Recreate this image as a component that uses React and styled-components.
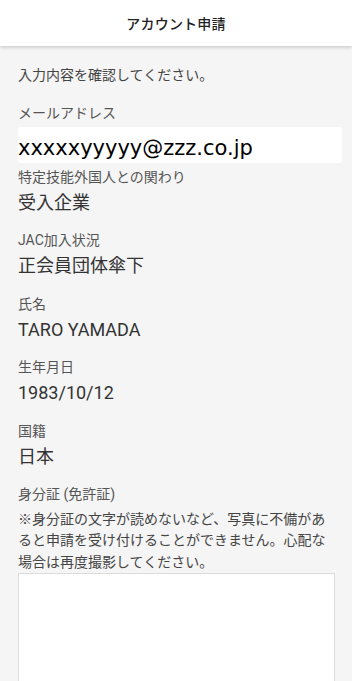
import React from "react";
import styled, { createGlobalStyle } from "styled-components";

const Global = createGlobalStyle`
  html, body { margin: 0; padding: 0; background: #f5f5f5; }
  body { font-family: Roboto, "Noto Sans CJK JP", sans-serif; -webkit-font-smoothing: antialiased; }
  * { box-sizing: border-box; }
`;

const Page = styled.div`
  height: 681px;
  background: #f5f5f5;
  overflow: hidden;
`;

const Header = styled.header`
  height: 46px;
  background: #fff;
  display: flex;
  align-items: center;
  justify-content: center;
  box-shadow: 0 1px 4px rgba(0, 0, 0, 0.22);
  position: relative;
`;

const Title = styled.h1`
  margin: 0;
  font-size: 14px;
  font-weight: 500;
  color: #222;
  letter-spacing: 0.2px;
`;

const Content = styled.main`
  padding: 19px 10px 0 18px;
`;

const Intro = styled.p`
  margin: 0 0 18px;
  font-size: 14px;
  line-height: 20px;
  color: #444;
`;

const Field = styled.section`
  margin-bottom: ${(p) => (p.$tight ? "0" : "14.4px")};
`;

const Label = styled.div`
  font-size: 14px;
  line-height: 20px;
  color: #555;
`;

const Value = styled.div`
  margin-top: 2px;
  font-size: 18px;
  line-height: 27px;
  color: #333;
`;

const EmailBox = styled.div`
  margin: 4px 0 4px;
  width: 324px;
  height: 36px;
  background: #fff;
  border-radius: 2px;
  display: flex;
  align-items: center;
  padding-top: 6px;
  font-family: "DejaVu Sans", sans-serif;
  font-size: 21px;
  color: #000;
`;

const Note = styled.p`
  margin: 5px 0 0;
  font-size: 14px;
  line-height: 21.5px;
  color: #444;
`;

const PhotoBox = styled.div`
  width: 317px;
  height: 160px;
  background: #fff;
  border: 1px solid #dcdcdc;
  border-bottom: none;
`;

const fields = [
  { label: "特定技能外国人との関わり", value: "受入企業" },
  { label: "JAC加入状況", value: "正会員団体傘下" },
  { label: "氏名", value: "TARO YAMADA" },
  { label: "生年月日", value: "1983/10/12" },
  { label: "国籍", value: "日本" },
];

export default function App() {
  return (
    <Page>
      <Global />
      <Header>
        <Title>アカウント申請</Title>
      </Header>
      <Content>
        <Intro>入力内容を確認してください。</Intro>
        <Field $tight>
          <Label>メールアドレス</Label>
          <EmailBox>xxxxxyyyyy@zzz.co.jp</EmailBox>
        </Field>
        {fields.map((f) => (
          <Field key={f.label}>
            <Label>{f.label}</Label>
            <Value>{f.value}</Value>
          </Field>
        ))}
        <Field $tight>
          <Label>身分証 (免許証)</Label>
          <Note>
            ※身分証の文字が読めないなど、写真に不備があ
            <br />
            ると申請を受け付けることができません。心配な
            <br />
            場合は再度撮影してください。
          </Note>
          <PhotoBox />
        </Field>
      </Content>
    </Page>
  );
}
